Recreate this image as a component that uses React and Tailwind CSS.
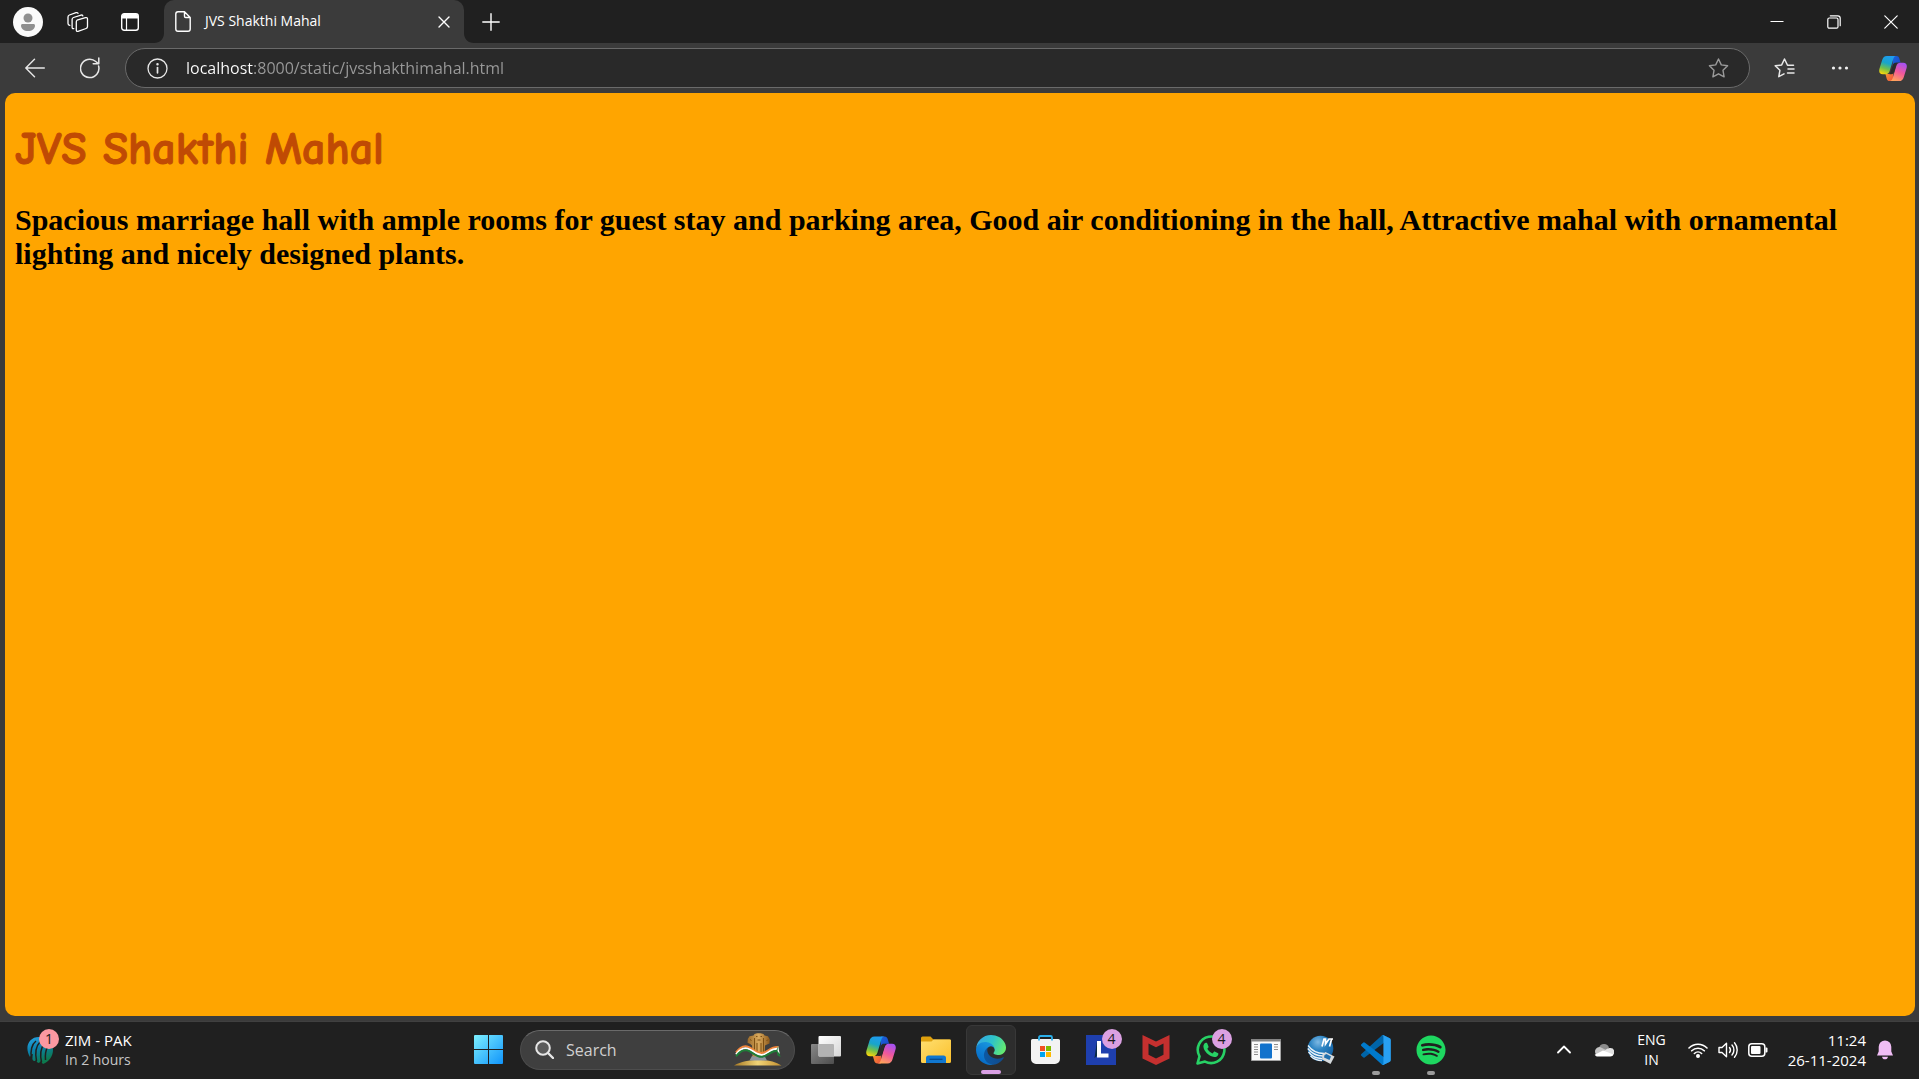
import React from "react";
import { FaSpotify } from "react-icons/fa";

const line = { fill: "none", stroke: "currentColor", strokeLinecap: "round", strokeLinejoin: "round" };

function CopilotIcon({ id, className }) {
  return (
    <svg viewBox="0 0 30 28" className={className} aria-hidden="true">
      <defs>
        <linearGradient id={id + "a"} x1="0.6" y1="0" x2="0.3" y2="1">
          <stop offset="0" stopColor="#1f9bf0" />
          <stop offset="0.4" stopColor="#18a5c9" />
          <stop offset="0.7" stopColor="#6fc04c" />
          <stop offset="1" stopColor="#f5d40c" />
        </linearGradient>
        <linearGradient id={id + "b"} x1="0.7" y1="0" x2="0.3" y2="1">
          <stop offset="0" stopColor="#a651f2" />
          <stop offset="0.5" stopColor="#f1589a" />
          <stop offset="1" stopColor="#ffa45a" />
        </linearGradient>
        <linearGradient id={id + "c"} x1="0" y1="0" x2="1" y2="1">
          <stop offset="0" stopColor="#1a63d8" />
          <stop offset="1" stopColor="#1b45c8" />
        </linearGradient>
        <linearGradient id={id + "d"} x1="0" y1="0" x2="1" y2="1">
          <stop offset="0" stopColor="#f7a531" />
          <stop offset="1" stopColor="#ee4f3c" />
        </linearGradient>
      </defs>
      <path d="M15 .5h3.500c1.800 0 2.700.9 3.200 2.500l1.400 4.700H20c-2 0-3.300 1-3.900 3l-1.600 4z" fill={`url(#${id}c)`} />
      <path d="M15 27.500h-3.500c-1.800 0-2.700-.9-3.200-2.500L6.900 20H10c2 0 3.300-1 3.900-3l1.600-4z" fill={`url(#${id}d)`} />
      <path d="M8.500.5h9.700c-1.700.3-2.400 1.500-2.900 3.200l-3.800 12.800c-.7 2.300-1.900 3.700-4.500 3.700H4c-3.300 0-4.400-2.500-3.500-5.800L3.400 5C4.200 2.200 5.700.5 8.500.5z" fill={`url(#${id}a)`} />
      <path d="M21.500 27.500h-9.700c1.700-.3 2.400-1.500 2.900-3.200l3.800-12.800c.7-2.300 1.900-3.700 4.500-3.700h3c3.300 0 4.400 2.500 3.500 5.800L26.600 23c-.8 2.800-2.300 4.500-5.100 4.500z" fill={`url(#${id}b)`} />
      <path d="m13.800 13.500 1.200-3.800c.6-1.300 1.500-1.900 2.900-1.900h1.800c-.7.900-1 1.900-1.400 3.200l-2.100 6.700c-.6 1.600-1.600 2.400-3 2.400h-2c.7-.7 1-1.600 1.400-2.800z" fill="#2b2b2b" />
    </svg>
  );
}

function TabStrip() {
  return (
    <header className="flex h-[43px] items-stretch bg-[#202020] text-white">
      <button aria-label="Profile" className="ml-[13px] flex items-center">
        <svg width="30" height="30" viewBox="0 0 30 30" className="block">
          <circle cx="15" cy="15" r="15" fill="#fafafa" />
          <circle cx="15" cy="11" r="4.500" fill="#8f8f8f" />
          <path d="M8 18.500c0-.9.600-1.500 1.500-1.500h11c.9 0 1.500.6 1.500 1.500 0 3.500-3 5.500-7 5.500s-7-2-7-5.500z" fill="#8f8f8f" />
        </svg>
      </button>
      <button aria-label="Workspaces" className="ml-6 flex items-center">
        <svg width="22" height="22" viewBox="0 0 22 22" {...line} strokeWidth="1.300">
          <path d="M10 9.200 18.500 6.700q2-.5 2 1.300v7.500q0 1.500-1.400 2L11 20.300q-1.700.5-1.700-1.300v-8q0-1.400.7-1.800z" />
          <path d="M6.800 17.700q-1.700.2-1.700-1.500V8.500Q5.100 7 6.500 6.500l7.500-2.400q1.600-.4 1.800.8" />
          <path d="M2.800 14.300Q1 14 1 12.500V6q0-1.500 1.400-2l6.600-2.300q1.500-.5 2 .6" />
        </svg>
      </button>
      <button aria-label="Tab actions" className="ml-8 flex items-center">
        <svg width="18" height="18" viewBox="0 0 18 18">
          <rect x=".7" y=".7" width="16.600" height="16.600" rx="2.500" fill="none" stroke="#fff" strokeWidth="1.400" />
          <path d="M1 5.500V3a2 2 0 0 1 2-2h12a2 2 0 0 1 2 2v2.500z" fill="#fff" />
          <path d="M5.500 5v12" stroke="#fff" strokeWidth="1.200" />
        </svg>
      </button>
      <svg width="10" height="10" viewBox="0 0 10 10" className="ml-[15px] self-end" aria-hidden="true">
        <path d="M10 0v10H0C6 10 10 6 10 0z" fill="#3b3b3b" />
      </svg>
      <div className="flex w-[300px] items-center rounded-t-[10px] bg-[#3b3b3b] pr-3.5 pl-[11px]">
        <svg width="16" height="21" viewBox="0 0 16 21" {...line} strokeWidth="1.400" aria-hidden="true">
          <path d="M9.500.8H3A2.200 2.200 0 0 0 .8 3v15A2.200 2.200 0 0 0 3 20.200h10a2.200 2.200 0 0 0 2.200-2.200V6.500zM9.500.8v4.500c0 .8.400 1.200 1.200 1.200h4.500" />
        </svg>
        <span className="ml-3.5 flex-1 pb-0.5 text-[14px] leading-5">JVS Shakthi Mahal</span>
        <button aria-label="Close tab">
          <svg width="12" height="12" viewBox="0 0 12 12" {...line} strokeWidth="1.400"><path d="m1 1 10 10M11 1 1 11" /></svg>
        </button>
      </div>
      <svg width="10" height="10" viewBox="0 0 10 10" className="self-end" aria-hidden="true">
        <path d="M0 0v10h10C4 10 0 6 0 0z" fill="#3b3b3b" />
      </svg>
      <button aria-label="New tab" className="ml-2">
        <svg width="18" height="18" viewBox="0 0 18 18" {...line} strokeWidth="1.400"><path d="M9 .8v16.400M.8 9h16.400" /></svg>
      </button>
      <div className="ml-auto flex">
        <button aria-label="Minimize" className="flex w-[57px] items-center justify-center">
          <svg width="14" height="14" viewBox="0 0 14 14"><path d="M.5 6.500h13" stroke="#fff" strokeWidth="1" /></svg>
        </button>
        <button aria-label="Restore" className="flex w-[57px] items-center justify-center">
          <svg width="14" height="14" viewBox="0 0 14 14" {...line} strokeWidth="1.200">
            <rect x=".8" y="3" width="10.200" height="10.200" rx="1.500" />
            <path d="M3.300.8h7.500a2.400 2.400 0 0 1 2.400 2.400v7.500" />
          </svg>
        </button>
        <button aria-label="Close" className="flex w-[57px] items-center justify-center">
          <svg width="14" height="14" viewBox="0 0 14 14" {...line} strokeWidth="1.200"><path d="m.8.8 12.400 12.400M13.200.8.8 13.200" /></svg>
        </button>
      </div>
    </header>
  );
}

function Toolbar() {
  return (
    <nav className="flex h-[50px] items-center bg-[#3b3b3b] text-[#e8e8e8]">
      <button aria-label="Back" className="ml-[25px]">
        <svg width="20" height="20" viewBox="0 0 20 20" {...line} strokeWidth="1.400"><path d="M19.300 10H1M9.500 1.300.8 10l8.700 8.700" /></svg>
      </button>
      <button aria-label="Refresh" className="ml-[35px]">
        <svg width="20" height="22" viewBox="0 0 20 22" {...line} strokeWidth="1.500">
          <path d="M18.600 9A9.200 9.200 0 1 1 15.800 4.500L18.300 6.600M18.800 1v5.800h-5.600" />
        </svg>
      </button>
      <div className="ml-[25px] flex h-10 flex-1 items-center rounded-full border border-[#6a6a6a] bg-[#292929]">
        <button aria-label="View site information" className="ml-[21px]">
          <svg width="21" height="21" viewBox="0 0 21 21" {...line} strokeWidth="1.300">
            <circle cx="10.500" cy="10.500" r="9.500" />
            <path d="M10.500 9.500v5.300" strokeWidth="1.700" />
            <circle cx="10.500" cy="6.300" r=".6" fill="currentColor" />
          </svg>
        </button>
        <input
          aria-label="Address"
          readOnly
          value="localhost:8000/static/jvsshakthimahal.html"
          className="ml-[18px] flex-1 bg-linear-to-r from-white from-[67px] to-[#9a9a9a] to-[67px] bg-clip-text text-[16px] leading-6 text-transparent outline-none"
        />
        <button aria-label="Add to favorites" className="mr-5 text-[#9a9a9a]">
          <svg width="21" height="20" viewBox="0 0 21 20" {...line} strokeWidth="1.400">
            <path d="m10.500 1 2.800 5.900 6.300.9-4.600 4.500 1.100 6.500-5.600-3-5.600 3L6 12.300 1.400 7.800l6.300-.9z" />
          </svg>
        </button>
      </div>
      <button aria-label="Favorites" className="ml-6">
        <svg width="21" height="20" viewBox="0 0 21 20" {...line} strokeWidth="1.500">
          <path d="M19.500 7.300h-6L10.500 1 7.700 6.900l-6.500.9L5.900 12.300l-1.100 6.400 5.200-2.800M14 11h6M13.500 15h6.500" />
        </svg>
      </button>
      <button aria-label="Settings and more" className="ml-9">
        <svg width="18" height="6" viewBox="0 0 18 6" fill="#f0f0f0"><circle cx="2.500" cy="3" r="1.600" /><circle cx="9" cy="3" r="1.600" /><circle cx="15.500" cy="3" r="1.600" /></svg>
      </button>
      <button aria-label="Copilot" className="mr-3 ml-[30px]">
        <CopilotIcon id="cpt" className="h-[27px] w-7" />
      </button>
    </nav>
  );
}

function Badge({ children, className }) {
  return (
    <span className={"absolute flex size-5 items-center justify-center rounded-full text-[14px] leading-5 text-[#1a1a1a] " + className}>
      {children}
    </span>
  );
}

function TaskApp({ label, active, running, badge, children }) {
  return (
    <button aria-label={label} className="flex w-[55px] justify-center">
      <span className={"relative flex size-[50px] items-center justify-center rounded-md " + (active ? "border border-[#383838] bg-[#2d2d2d]" : "")}>
        {children}
        {badge && <Badge className="top-1 right-1 bg-[#dba0e2]">{badge}</Badge>}
        {active && <span className="absolute bottom-0 h-1 w-5 rounded-full bg-[#d9a0e4]" />}
        {running && <span className="absolute bottom-0 h-1 w-2 rounded-full bg-[#9b9b9b]" />}
      </span>
    </button>
  );
}

function Emblem() {
  const ribbon = "C5 16 8 12.500 13 13.500C18 14.500 22 20.500 28 20C34 19.500 37 13 44.500 14";
  return (
    <svg width="48" height="34" viewBox="0 0 48 34" aria-hidden="true">
      <defs>
        <linearGradient id="sand" x1="0" x2="1"><stop offset="0" stopColor="#a87a24" /><stop offset=".5" stopColor="#f1d477" /><stop offset="1" stopColor="#c4902f" /></linearGradient>
        <linearGradient id="lion" x1="0" x2="1"><stop offset="0" stopColor="#9a6a2a" /><stop offset=".5" stopColor="#d9a95c" /><stop offset="1" stopColor="#8d5a1c" /></linearGradient>
      </defs>
      <path d="M0 32.500C7 28.500 15 27 24 27s17 1.500 23.500 5.500z" fill="url(#sand)" />
      <path d="M18 23h12.500l2.500 4.500H15.500z" fill="#8f969e" />
      <path d="M20.500 1 23 .3h3.500l3 .7 1 1.500 3.500.8 1.800 3.200-.3 4-2.500 1-2 1-.5 11h-12l-.5-11-1.800-1.500-2.700-1.200.3-3.800 1.700-2.700 4-.8z" fill="url(#lion)" />
      <path d="M22 3.500h1.500M26.500 3.500H28M23.500 7h3M20.500 5v17M23 10v12M27 10v12M29.500 5v17M16 6.500l1.500 1M34 6.500 32.500 8" stroke="#75480f" strokeWidth=".9" fill="none" />
      <path d={"M2 19.500" + ribbon} stroke="#f0853a" strokeWidth="2" fill="none" />
      <g transform="translate(0 1.900)"><path d={"M2 19.500" + ribbon} stroke="#fff" strokeWidth="2" fill="none" /></g>
      <g transform="translate(0 3.800)"><path d={"M2 19.500" + ribbon} stroke="#1f7d38" strokeWidth="2" fill="none" /></g>
      <path d="M44 13l2.500 11-3-1.500-1-5z" fill="#1f7d38" />
      <path d="M44 13l1.800 8-2.300-3z" fill="#fff" />
    </svg>
  );
}

function Taskbar() {
  return (
    <footer className="grid h-[58px] grid-cols-[1fr_auto_1fr] items-center border-t border-[#404040] bg-[#202020] pb-0.5 text-white">
      <button className="flex items-center justify-self-start pl-[27px] text-left">
        <span className="relative">
          <svg width="27" height="30" viewBox="0 0 27 30" className="block" aria-hidden="true">
            <defs><linearGradient id="icc" x1="0" y1="0" x2=".4" y2="1"><stop offset="0" stopColor="#28a7e8" /><stop offset=".5" stopColor="#0b80aa" /><stop offset="1" stopColor="#0c7a4e" /></linearGradient></defs>
            <path d="M3 22C-3 12 2 2 12 2c9 0 14 6 14 13 0 6-4 12-10 14-1-1-1.500-2-1.500-4-1 1.500-1.500 2.500-3 3-1.500-.5-2-1.500-2-3.500-1 1-1.500 1.500-2.500 1.500C4.500 25 5.500 21 6 19c-1.500 0-2 1-3 3z" fill="url(#icc)" />
            <path d="M4.500 23C3 16 5 9 9 6M9.500 26C8 18 9 11 13 7M14.500 27C13 20 14 13 17 9M18.500 25c-.5-5 0-9 2-13" stroke="#202020" strokeWidth="1.500" fill="none" />
          </svg>
          <Badge className="-top-1.5 left-3 bg-[#fb98a1]">1</Badge>
        </span>
        <span className="ml-[11px] text-[15px] leading-5">
          <span className="block">ZIM - PAK</span>
          <span className="block text-[14px] leading-5 text-[#c6c6c6]">In 2 hours</span>
        </span>
      </button>

      <div className="flex items-center">
        <button aria-label="Start" className="flex w-[55px] justify-center">
          <svg width="29" height="29" viewBox="0 0 29 29">
            <defs><linearGradient id="win" x1="0" y1="0" x2="1" y2="1"><stop offset="0" stopColor="#7df0ff" /><stop offset="1" stopColor="#1094fb" /></linearGradient></defs>
            <path d="M1 0h13v14H0V1a1 1 0 0 1 1-1zM15 0h13a1 1 0 0 1 1 1v13H15zM0 15h14v14H1a1 1 0 0 1-1-1zM15 15h14v13a1 1 0 0 1-1 1H15z" fill="url(#win)" />
          </svg>
        </button>
        <label className="mr-[3px] ml-1 flex h-10 w-[275px] items-center rounded-full border border-[#4d4d4d] border-t-[#6a6a6a] bg-[#3f3f3f] pr-3 pl-3.5">
          <svg width="19" height="19" viewBox="0 0 19 19" {...line} stroke="#e6e6e6" strokeWidth="2" aria-hidden="true"><circle cx="8" cy="8" r="6.800" fill="#5a5a5a" /><path d="m13 13 5 5" strokeWidth="2.400" /></svg>
          <input type="search" aria-label="Search" placeholder="Search" className="ml-3 w-0 flex-1 text-[16px] leading-6 outline-none placeholder:text-[#d0d0d0] placeholder:opacity-100" />
          <Emblem />
        </label>

        <TaskApp label="Task view">
          <svg width="30" height="28" viewBox="0 0 30 28">
            <defs>
              <linearGradient id="tv1" x1="0" y1="0" x2="1" y2="1"><stop offset="0" stopColor="#fff" /><stop offset="1" stopColor="#d6d6d6" /></linearGradient>
              <linearGradient id="tv2" x1="0" y1="0" x2="1" y2="1"><stop offset="0" stopColor="#888" /><stop offset="1" stopColor="#4d4d4d" /></linearGradient>
            </defs>
            <rect y="8" width="23" height="20" rx="1" fill="url(#tv2)" />
            <rect x="7.500" y="0" width="22.500" height="20.500" rx="1" fill="url(#tv1)" />
            <path d="M7.500 8H22a1 1 0 0 1 1 1v11.500H8.500a1 1 0 0 1-1-1z" fill="#b3b3b3" />
          </svg>
        </TaskApp>
        <TaskApp label="Copilot"><CopilotIcon id="cpb" className="h-7 w-[30px]" /></TaskApp>
        <TaskApp label="File Explorer">
          <svg width="30" height="27" viewBox="0 0 30 27">
            <defs><linearGradient id="fe" x1="0" y1="0" x2="1" y2="1"><stop offset="0" stopColor="#ffdf70" /><stop offset="1" stopColor="#fbc02c" /></linearGradient></defs>
            <path d="M0 2a1.500 1.500 0 0 1 1.500-1.500H9.500L12.500 3.500H28.500A1.500 1.500 0 0 1 30 5v5H0z" fill="#dfa00d" />
            <path d="M0 5.500h10.500L12.500 3.500H29a1 1 0 0 1 1 1V25.500a1.500 1.500 0 0 1-1.500 1.500h-27A1.500 1.500 0 0 1 0 25.500z" fill="url(#fe)" />
            <path d="M5 27v-5a2.500 2.500 0 0 1 2.500-2.500h15A2.500 2.500 0 0 1 25 22v5z" fill="#1077d0" />
            <path d="M8.500 23.300h13" stroke="#0a4b8d" strokeWidth="1.300" />
          </svg>
        </TaskApp>
        <TaskApp label="Microsoft Edge" active>
          <svg width="30" height="30" viewBox="0 0 256 256">
            <defs>
              <linearGradient id="e1" x1="0" x2="1"><stop offset="0" stopColor="#0c59a4" /><stop offset="1" stopColor="#114a8b" /></linearGradient>
              <linearGradient id="e2" x1=".8" y1="0" x2=".3" y2="1"><stop offset="0" stopColor="#1b9de2" /><stop offset=".5" stopColor="#0f80d4" /><stop offset="1" stopColor="#0669c4" /></linearGradient>
              <linearGradient id="e3" x1="0" y1=".3" x2="1" y2=".6"><stop offset="0" stopColor="#35a6e6" /><stop offset=".5" stopColor="#2ec3c8" /><stop offset="1" stopColor="#66eb6e" /></linearGradient>
            </defs>
            <path d="M231 190.500c-3.400 1.800-6.900 3.400-10.500 4.700a101.900 101.900 0 0 1-35.900 6.500c-47.300 0-88.500-32.500-88.500-74.300 0-11.500 6.400-21.900 16.500-27.300-42.800 1.800-53.800 46.400-53.800 72.500 0 73.900 68.100 81.400 82.800 81.400 7.900 0 19.800-2.300 27-4.600l1.300-.4a128.300 128.300 0 0 0 66.600-52.800 4 4 0 0 0-5.500-5.700z" fill="url(#e1)" />
            <path d="M105.700 241.400a79.200 79.200 0 0 1-22.700-21.300 80.700 80.700 0 0 1 29.500-120c3.200-1.500 8.500-4.100 15.600-4a32.400 32.400 0 0 1 25.700 13 32 32 0 0 1 6.300 18.700c0-.2 24.500-79.600-80-79.600-43.900 0-80 41.700-80 78.200a130.200 130.200 0 0 0 12.100 56A128 128 0 0 0 168.600 249a75.500 75.500 0 0 1-62.800-7.700z" fill="url(#e2)" />
            <path d="M152.300 148.900c-.9 1-3.400 2.500-3.400 5.600 0 2.600 1.700 5.200 4.800 7.300 14.300 10 41.400 8.600 41.500 8.600 10.700 0 21.100-2.900 30.300-8.300A61.400 61.400 0 0 0 256 109.100c.3-22.400-8-37.300-11.300-43.900C223.500 23.900 177.700 0 128 0A128 128 0 0 0 0 126.200c.5-36.500 36.800-66 80-66 3.500 0 23.500.3 42 10.100 16.300 8.600 24.900 18.900 30.800 29.200 6.200 10.700 7.300 24.100 7.300 29.500 0 5.300-2.700 13.300-7.800 19.900z" fill="url(#e3)" />
          </svg>
        </TaskApp>
        <TaskApp label="Microsoft Store">
          <svg width="29" height="29" viewBox="0 0 29 29">
            <path d="M8 6V2.500A1.500 1.500 0 0 1 9.500 1h10A1.500 1.500 0 0 1 21 2.500V6" fill="none" stroke="#2cb0ea" strokeWidth="1.800" />
            <path d="M0 5.500A1.500 1.500 0 0 1 1.500 4h26A1.500 1.500 0 0 1 29 5.500V24a5 5 0 0 1-5 5H5a5 5 0 0 1-5-5z" fill="#f3f3f3" />
            <path d="M8 4v1.500M21 4v1.500" stroke="#2cb0ea" strokeWidth="1.800" />
            <path fill="#f25022" d="M9 11h5v5H9z" /><path fill="#7fba00" d="M15 11h5v5h-5z" /><path fill="#00a4ef" d="M9 17h5v5H9z" /><path fill="#ffb900" d="M15 17h5v5h-5z" />
          </svg>
        </TaskApp>
        <TaskApp label="Lenovo Vantage" badge="4">
          <svg width="30" height="30" viewBox="0 0 30 30">
            <path fill="#1e3fae" d="M0 0h30v30H0z" />
            <path d="m11 6-2.500 17 2.500-2z" fill="#0b2b45" />
            <path d="M13 6v14.500h9.500" fill="none" stroke="#fff" strokeWidth="4" />
          </svg>
        </TaskApp>
        <TaskApp label="McAfee">
          <svg width="28" height="30" viewBox="0 0 28 30">
            <path d="M.5 0 14 6.500 27.500 0v23.500L14 30 .5 23.500zM6.500 8.500v11.300L14 23.500l7.500-3.700V8.500L14 12.300z" fill="#c5302f" fillRule="evenodd" />
          </svg>
        </TaskApp>
        <TaskApp label="WhatsApp" badge="4">
          <svg width="30" height="30" viewBox="0 0 30 30">
            <path d="M1.500 28.500 3.500 21.300A13.300 13.300 0 1 1 9 26.600z" fill="#202020" stroke="#27d165" strokeWidth="2.600" strokeLinejoin="round" />
            <path d="M10.200 7.800c.6 0 .9.100 1.200.9l1.100 2.700c.2.500 0 .9-.3 1.300l-.9 1.100c1.200 2.200 2.900 3.700 5.200 4.700l1.300-1.500c.4-.5.800-.5 1.300-.3l2.600 1.300c.6.300.8.500.7 1-.2 2.200-2.200 3.300-4.200 3.100C12.800 21.500 7.600 16 7.400 11.600c0-1.700 1-3.800 2.800-3.800z" fill="#27d165" />
          </svg>
        </TaskApp>
        <TaskApp label="Photos">
          <svg width="30" height="22" viewBox="0 0 30 22">
            <path fill="#fafafa" stroke="#a3a3a3" d="M.5.5h29v21H.5z" />
            <path fill="#858585" d="M0 0h30v2.500H0z" />
            <path d="M3 5.500h4M3 8h4M3 10.500h4M3 13h4M3 15.500h4M23 5.500h4M23 8h4M23 10.500h4" stroke="#8d8d8d" />
            <rect x="9" y="4.500" width="12" height="15" rx="1" fill="#1272cc" />
          </svg>
        </TaskApp>
        <TaskApp label="Cricket">
          <svg width="28" height="30" viewBox="0 0 28 30">
            <defs><radialGradient id="cr" cx=".4" cy=".25" r=".8"><stop offset="0" stopColor="#7db9e3" /><stop offset=".4" stopColor="#2b83c2" /><stop offset="1" stopColor="#0e5a9d" /></radialGradient></defs>
            <circle cx="13.500" cy="13.500" r="12.800" fill="url(#cr)" />
            <path d="M1 10.500C5 16 10 18.500 17 18.500M.8 13.500C5 19 10 21 16 21M1.500 17C5 21.500 10 23.500 15 23.500M3.500 21C7 24.500 11 25.500 15 25.500" stroke="#e9f2f8" strokeWidth="1.300" fill="none" />
            <path d="m15.500 19 3-2 9 4.500-4 7.500-8.500-4.500z" fill="#d5dadd" />
            <path d="m17.500 20 2-1 4.500 2.500-1.500 3.500-5.500-2.500z" fill="#1f6fae" />
            <path d="M15 11.500 17 4h1.500v5L22 4h4M24.500 4.500l-2 7" stroke="#fff" strokeWidth="1.700" fill="none" />
          </svg>
        </TaskApp>
        <TaskApp label="Visual Studio Code" running>
          <svg width="30" height="30" viewBox="0 0 100 100">
            <path d="M96 10.800 75.500.9a6.200 6.200 0 0 0-7.100 1.200L1.300 63.200a4.200 4.200 0 0 0 0 6.200l5.500 5a4.200 4.200 0 0 0 5.300.2l80.800-61.300c2.700-2 6.600-.1 6.600 3.300V16.400a6.200 6.200 0 0 0-3.500-5.600z" fill="#0065a9" />
            <path d="m96 89.200-20.500 9.900a6.200 6.200 0 0 1-7.100-1.200L1.300 36.800a4.200 4.200 0 0 1 0-6.200l5.500-5a4.200 4.200 0 0 1 5.300-.2l80.800 61.300c2.700 2 6.600.1 6.600-3.300v.2a6.200 6.200 0 0 1-3.500 5.600z" fill="#007acc" />
            <path d="M75.500 99.100a6.200 6.200 0 0 1-7.100-1.200c2.300 2.300 6.300.7 6.300-2.600V4.700c0-3.300-4-4.900-6.300-2.600A6.200 6.200 0 0 1 75.500.9L96 10.800a6.200 6.200 0 0 1 3.500 5.600v67.200a6.200 6.200 0 0 1-3.500 5.600z" fill="#28a0f2" />
          </svg>
        </TaskApp>
        <TaskApp label="Spotify" running><FaSpotify size={30} color="#1ed760" /></TaskApp>
      </div>

      <div className="flex items-center justify-self-end pr-[26px]">
        <button aria-label="Show hidden icons">
          <svg width="14" height="9" viewBox="0 0 14 9" {...line} strokeWidth="1.800" className="block"><path d="m1 7.500 6-6 6 6" /></svg>
        </button>
        <button aria-label="OneDrive" className="ml-[23px]">
          <svg width="20" height="14" viewBox="0 0 20 14" className="block">
            <path d="M5 5a5.200 5.200 0 0 1 10-.5L11 9z" fill="#8b8b8b" />
            <path d="M4.500 13A4.500 4.500 0 1 1 6.500 4.200L14 8 8 13z" fill="#c3c3c3" />
            <path d="M3 13 12 6.500a5 5 0 0 1 4-1.500 4 4 0 0 1 .5 8z" fill="#e2e2e2" />
            <path d="M4.500 13.500c-2 0-3-.5-3.800-1.800L9 7.500l10.500 4c-.5 1.300-1.700 2-3.200 2z" fill="#fff" />
          </svg>
        </button>
        <button className="ml-[23px] text-center text-[14px] leading-5">ENG<br />IN</button>
        <button aria-label="Network, volume and battery" className="ml-[22px] flex items-center gap-2.5">
          <svg width="20" height="16" viewBox="0 0 20 16" {...line} strokeWidth="1.600">
            <path d="M1 6a12.700 12.700 0 0 1 18 0M3.700 8.800a9 9 0 0 1 12.600 0M6.400 11.500a5.200 5.200 0 0 1 7.200 0" /><circle cx="10" cy="14" r="1.200" fill="currentColor" />
          </svg>
          <svg width="20" height="18" viewBox="0 0 20 18" {...line} strokeWidth="1.400">
            <path d="M1 6.500h3L8.500 2.200v13.600L4 11.500H1zM11.500 6.500a4 4 0 0 1 0 5M14 4a7.500 7.500 0 0 1 0 10M16.500 1.800a11 11 0 0 1 0 14.400" />
          </svg>
          <svg width="20" height="14" viewBox="0 0 20 14">
            <rect x=".8" y=".8" width="16" height="12.400" rx="3" fill="none" stroke="#fff" strokeWidth="1.500" />
            <rect x="3" y="3" width="9.500" height="8" rx="1" fill="#fff" /><path d="M17.500 4.500h1a1 1 0 0 1 1 1v3a1 1 0 0 1-1 1h-1z" fill="#fff" />
          </svg>
        </button>
        <button className="ml-5 text-right text-[15px] leading-5">11:24<br />26-11-2024</button>
        <button aria-label="Notifications" className="ml-[11px]">
          <svg width="16" height="20" viewBox="0 0 16 20" fill="#f0bdf5" className="block">
            <path d="M8 .5a6.300 6.300 0 0 1 6.300 6.300v4.700L16 15.500H0l1.700-4V6.800A6.300 6.300 0 0 1 8 .5zM5 16.700h6c-.3 1.600-1.400 2.600-3 2.600s-2.700-1-3-2.600z" />
          </svg>
        </button>
      </div>
    </footer>
  );
}

export default function App() {
  return (
    <div className="flex h-screen flex-col bg-[#3b3b3b] font-['Open_Sans','Noto_Sans',sans-serif]">
      <TabStrip />
      <Toolbar />
      <main className="mr-1 mb-[5px] ml-[5px] flex-1 rounded-[10px] bg-[#ffa500] px-2.5 pt-[29px]">
        <h1 className="font-['Comic_Sans_MS','Comic_Neue',Lato,cursive] text-[46px] leading-[56px] font-bold text-[#c04a04] [-webkit-text-stroke:1px_#c04a04]">JVS Shakthi Mahal</h1>
        <h2 className="mt-[25px] font-['Liberation_Serif',serif] text-[30px] leading-[34px] font-bold text-black">
          Spacious marriage hall with ample rooms for guest stay and parking area, Good air conditioning in the hall, Attractive mahal with ornamental lighting and nicely designed plants.
        </h2>
      </main>
      <Taskbar />
    </div>
  );
}
